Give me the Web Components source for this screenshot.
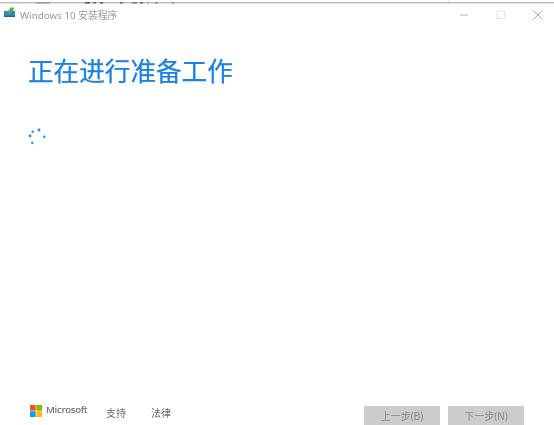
<!DOCTYPE html>
<html lang="zh">
<head>
<meta charset="utf-8">
<title>Windows 10 安装程序</title>
<style>
    html, body { margin: 0; height: 100%; background: #fff; overflow: hidden; }
</style>
</head>
<body>
<setup-window>
    <title-bar slot="top">Windows 10 安装程序</title-bar>
    <h-title>正在进行准备工作</h-title>
    <busy-dots></busy-dots>
    <setup-footer slot="bottom"></setup-footer>
</setup-window>

<script>
const CJK = `"Noto Sans CJK SC", sans-serif`;

class SetupWindow extends HTMLElement {
    constructor() {
        super();
        this.attachShadow({ mode: "open" });
        this.shadowRoot.innerHTML = `
            <style>
                :host { display: flex; flex-direction: column; height: 425px; background: #fff; overflow: hidden; filter: blur(.35px); }
                main { flex: 1; padding: 29px 28px 0; }
            </style>
            <slot name="top"></slot>
            <main><slot></slot></main>
            <slot name="bottom"></slot>
        `;
    }
}

class TitleBar extends HTMLElement {
    constructor() {
        super();
        this.attachShadow({ mode: "open" });
        this.shadowRoot.innerHTML = `
            <style>
                :host { display: block; height: 26px; font: 9.8px "Noto Sans", ${CJK}; color: #9a9a9a; }
                .edge { display: block; width: 554px; height: 4px; }
                .row { display: flex; align-items: center; height: 22px; padding-left: 4px; }
                .logo { width: 12px; height: 12px; margin-right: 4px; margin-top: -4px; }
                .label { flex: 1; }
                .ctl { display: block; width: 10px; height: 10px; margin-top: -1px; }
                .min { margin-right: 27px; }
                .max { margin-right: 27px; }
                .close { margin-right: 11px; }
            </style>
            <svg class="edge" viewBox="0 0 554 4">
                <rect y="2" width="554" height="1.5" fill="#bdbdbd"/>
                <rect x="36" y="2" width="14" height="1.5" fill="#9c9c9c"/>
                <rect x="85" y="2" width="5" height="1.5" fill="#55586a"/>
                <rect x="93" y="2" width="3" height="1.5" fill="#6a6a6a"/>
                <rect x="100" y="2" width="3" height="1.5" fill="#55586a"/>
                <rect x="120" y="2" width="3" height="1.5" fill="#6a6a6a"/>
                <rect x="132" y="2" width="5" height="1.5" fill="#7b7b7b"/>
                <rect x="140" y="2" width="3" height="1.5" fill="#5f6272"/>
                <rect x="148" y="2" width="1" height="1.5" fill="#96707c"/>
                <rect x="155" y="2" width="3" height="1.5" fill="#8a8a8a"/>
                <rect x="172" y="2" width="2" height="1.5" fill="#8a8a8a"/>
                <rect x="448" y="0" width="1" height="2" fill="#e4e4e4"/>
            </svg>
            <div class="row">
                <svg class="logo" viewBox="0 0 12 12">
                    <rect x="0" y="4" width="11" height="6" fill="#3a82c4"/>
                    <rect x="0" y="8.8" width="11" height="1.2" fill="#2a5f98"/>
                    <path d="M3 7.4 L4.4 3.6 L6.2 2.4 L5.2 1 L9.8 .2 L9.4 4.8 L8.2 3.6 L6.8 6.6 Z" fill="#3fb54e"/>
                </svg>
                <span class="label"><slot></slot></span>
                <svg class="ctl min" viewBox="0 0 10 10"><rect x="1" y="4.5" width="8" height="1" fill="#b5b5b5"/></svg>
                <svg class="ctl max" viewBox="0 0 10 10"><rect x="1" y="1" width="7.5" height="7.5" fill="none" stroke="#e3e3e3"/></svg>
                <svg class="ctl close" viewBox="0 0 10 10"><path d="M.5 .5 L9.5 9.5 M9.5 .5 L.5 9.5" stroke="#a8a8a8" fill="none"/></svg>
            </div>
        `;
    }
}

class HTitle extends HTMLElement {
    constructor() {
        super();
        this.attachShadow({ mode: "open" });
        this.shadowRoot.innerHTML = `
            <style>
                :host { display: block; font: 25.6px/30px ${CJK}; color: #1a82e2; -webkit-text-stroke: .25px #1a82e2; }
            </style>
            <slot></slot>
        `;
    }
}

class BusyDots extends HTMLElement {
    constructor() {
        super();
        this.attachShadow({ mode: "open" });
        this.shadowRoot.innerHTML = `
            <style>
                :host { display: block; width: 20px; height: 20px; margin-top: 43px; }
                svg { display: block; }
            </style>
            <svg width="20" height="20" viewBox="0 0 20 20" fill="#2a8ae8">
                <circle cx="2" cy="8" r="1.4"/>
                <circle cx="4.7" cy="3.7" r="1.2"/>
                <circle cx="11" cy="2" r="1.4"/>
                <circle cx="16.3" cy="8.7" r="1.2"/>
                <circle cx="4.3" cy="14.7" r="1.2"/>
            </svg>
        `;
    }
}

class SetupFooter extends HTMLElement {
    constructor() {
        super();
        this.attachShadow({ mode: "open" });
        this.shadowRoot.innerHTML = `
            <style>
                :host { display: flex; align-items: flex-start; height: 19px; padding-left: 30px; font: 10px ${CJK}; color: #6b6b6b; }
                .logo { display: block; width: 12px; height: 12px; margin-top: -1px; }
                .ms { font: 600 9.6px/12px "Open Sans", sans-serif; color: #6f6f6f; margin: -2px 0 0 4px; width: 60px; letter-spacing: -.3px; }
                .link { width: 45px; line-height: 13px; }
                .spacer { flex: 1; }
                .actions { display: flex; gap: 8px; padding-right: 30px; height: 19px; }
            </style>
            <svg class="logo" viewBox="0 0 12 12">
                <rect width="5.7" height="5.7" fill="#f25022"/>
                <rect x="6.3" width="5.7" height="5.7" fill="#7fba00"/>
                <rect y="6.3" width="5.7" height="5.7" fill="#00a4ef"/>
                <rect x="6.3" y="6.3" width="5.7" height="5.7" fill="#ffb900"/>
            </svg>
            <span class="ms">Microsoft</span>
            <span class="link">支持</span>
            <span class="link">法律</span>
            <span class="spacer"></span>
            <div class="actions">
                <step-button>上一步(B)</step-button>
                <step-button>下一步(N)</step-button>
            </div>
        `;
    }
}

class StepButton extends HTMLElement {
    constructor() {
        super();
        this.attachShadow({ mode: "open" });
        this.shadowRoot.innerHTML = `
            <style>
                :host { display: flex; align-items: center; justify-content: center; width: 76px; height: 19px; background: #cccccc; color: #8a8a8a; font: 10px "Noto Sans", ${CJK}; }
            </style>
            <slot></slot>
        `;
    }
}

customElements.define("setup-window", SetupWindow);
customElements.define("title-bar", TitleBar);
customElements.define("h-title", HTitle);
customElements.define("busy-dots", BusyDots);
customElements.define("setup-footer", SetupFooter);
customElements.define("step-button", StepButton);
</script>
</body>
</html>
